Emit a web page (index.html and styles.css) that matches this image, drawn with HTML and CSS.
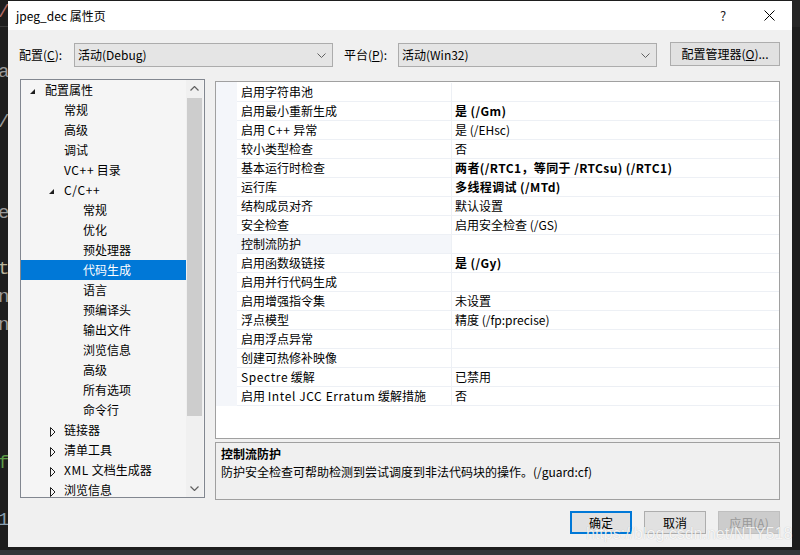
FILE: index.html
```html
<!DOCTYPE html>
<html lang="zh-CN">
<head>
<meta charset="utf-8">
<title>jpeg_dec 属性页</title>
<link rel="stylesheet" href="styles.css">
</head>
<body>
<div class="backdrop" aria-hidden="true">
  <span class="g g-slash1">/</span>
  <span class="g g-a">a</span>
  <span class="g g-slash2">/</span>
  <span class="g g-e">e</span>
  <span class="g g-t">t</span>
  <span class="g g-n1">n</span>
  <span class="g g-n2">n</span>
  <span class="g g-f">f</span>
  <span class="g g-1">1</span>
  <span class="rstrip"></span>
</div>

<div class="dialog">
  <div class="titlebar">
    <span class="title">jpeg_dec 属性页</span>
    <span class="tb-btn help">?</span>
    <span class="tb-btn close"><svg width="11" height="11" viewBox="0 0 11 11"><path d="M0.5 0.5 L10.5 10.5 M10.5 0.5 L0.5 10.5" stroke="#000" stroke-width="1" fill="none"/></svg></span>
  </div>

  <div class="content">
    <div class="toolbar">
      <span class="lbl lbl-config">配置(<u>C</u>):</span>
      <div class="select"><span class="sel-text">活动(Debug)</span><svg class="chev" width="9" height="5" viewBox="0 0 9 5"><polyline points="0.5,0.5 4.5,4.5 8.5,0.5" fill="none" stroke="#606060" stroke-width="1"/></svg></div>
      <span class="lbl lbl-platform">平台(<u>P</u>):</span>
      <div class="select"><span class="sel-text">活动(Win32)</span><svg class="chev" width="9" height="5" viewBox="0 0 9 5"><polyline points="0.5,0.5 4.5,4.5 8.5,0.5" fill="none" stroke="#606060" stroke-width="1"/></svg></div>
      <button class="btn btn-manager">配置管理器(<u>O</u>)...</button>
    </div>

    <div class="main">
      <div class="tree">
        <ul class="tree-list">
          <li class="l0"><span class="tg"><svg width="6" height="6" viewBox="0 0 6 6"><polygon points="5,0 5,5 0,5" fill="#1e1e1e"/></svg></span>配置属性</li>
          <li class="l1"><span class="tg"></span>常规</li>
          <li class="l1"><span class="tg"></span>高级</li>
          <li class="l1"><span class="tg"></span>调试</li>
          <li class="l1"><span class="tg"></span><span class="lat">VC++</span>&nbsp;目录</li>
          <li class="l1"><span class="tg"><svg width="6" height="6" viewBox="0 0 6 6"><polygon points="5,0 5,5 0,5" fill="#1e1e1e"/></svg></span><span class="lat">C/C++</span></li>
          <li class="l2"><span class="tg"></span>常规</li>
          <li class="l2"><span class="tg"></span>优化</li>
          <li class="l2"><span class="tg"></span>预处理器</li>
          <li class="l2 selected"><span class="tg"></span>代码生成</li>
          <li class="l2"><span class="tg"></span>语言</li>
          <li class="l2"><span class="tg"></span>预编译头</li>
          <li class="l2"><span class="tg"></span>输出文件</li>
          <li class="l2"><span class="tg"></span>浏览信息</li>
          <li class="l2"><span class="tg"></span>高级</li>
          <li class="l2"><span class="tg"></span>所有选项</li>
          <li class="l2"><span class="tg"></span>命令行</li>
          <li class="l1"><span class="tg tg-c"><svg width="6" height="10" viewBox="0 0 6 10"><polygon points="0.5,0.5 5,5 0.5,9.5" fill="none" stroke="#1e1e1e" stroke-width="1"/></svg></span>链接器</li>
          <li class="l1"><span class="tg tg-c"><svg width="6" height="10" viewBox="0 0 6 10"><polygon points="0.5,0.5 5,5 0.5,9.5" fill="none" stroke="#1e1e1e" stroke-width="1"/></svg></span>清单工具</li>
          <li class="l1"><span class="tg tg-c"><svg width="6" height="10" viewBox="0 0 6 10"><polygon points="0.5,0.5 5,5 0.5,9.5" fill="none" stroke="#1e1e1e" stroke-width="1"/></svg></span><span class="lat">XML</span>&nbsp;文档生成器</li>
          <li class="l1"><span class="tg tg-c"><svg width="6" height="10" viewBox="0 0 6 10"><polygon points="0.5,0.5 5,5 0.5,9.5" fill="none" stroke="#1e1e1e" stroke-width="1"/></svg></span>浏览信息</li>
        </ul>
        <div class="scrollbar">
          <div class="sb-arrow"><svg width="9" height="5" viewBox="0 0 9 5"><polyline points="0.5,4.5 4.5,0.5 8.5,4.5" fill="none" stroke="#606060" stroke-width="1.2"/></svg></div>
          <div class="sb-track"><div class="sb-thumb"></div></div>
          <div class="sb-arrow"><svg width="9" height="5" viewBox="0 0 9 5"><polyline points="0.5,0.5 4.5,4.5 8.5,0.5" fill="none" stroke="#606060" stroke-width="1.2"/></svg></div>
        </div>
      </div>

      <div class="right">
        <div class="grid">
          <div class="rows">
            <div class="row"><div class="m"></div><div class="name">启用字符串池</div><div class="value"></div></div>
            <div class="row"><div class="m"></div><div class="name">启用最小重新生成</div><div class="value b">是 (/Gm)</div></div>
            <div class="row"><div class="m"></div><div class="name">启用 <span class="lat">C++</span> 异常</div><div class="value">是 (/EHsc)</div></div>
            <div class="row"><div class="m"></div><div class="name">较小类型检查</div><div class="value">否</div></div>
            <div class="row"><div class="m"></div><div class="name">基本运行时检查</div><div class="value b">两者(/RTC1，等同于 /RTCsu) (/RTC1)</div></div>
            <div class="row"><div class="m"></div><div class="name">运行库</div><div class="value b">多线程调试 (/MTd)</div></div>
            <div class="row"><div class="m"></div><div class="name">结构成员对齐</div><div class="value">默认设置</div></div>
            <div class="row"><div class="m"></div><div class="name">安全检查</div><div class="value">启用安全检查 (/GS)</div></div>
            <div class="row current"><div class="m"></div><div class="name">控制流防护</div><div class="value"></div></div>
            <div class="row"><div class="m"></div><div class="name">启用函数级链接</div><div class="value b">是 (/Gy)</div></div>
            <div class="row"><div class="m"></div><div class="name">启用并行代码生成</div><div class="value"></div></div>
            <div class="row"><div class="m"></div><div class="name">启用增强指令集</div><div class="value">未设置</div></div>
            <div class="row"><div class="m"></div><div class="name">浮点模型</div><div class="value">精度 (/fp:precise)</div></div>
            <div class="row"><div class="m"></div><div class="name">启用浮点异常</div><div class="value"></div></div>
            <div class="row"><div class="m"></div><div class="name">创建可热修补映像</div><div class="value"></div></div>
            <div class="row"><div class="m"></div><div class="name"><span class="lat">Spectre</span> 缓解</div><div class="value">已禁用</div></div>
            <div class="row"><div class="m"></div><div class="name">启用 <span class="lat">Intel JCC Erratum</span> 缓解措施</div><div class="value">否</div></div>
          </div>
        </div>
        <div class="desc">
          <div class="desc-title">控制流防护</div>
          <div class="desc-text">防护安全检查可帮助检测到尝试调度到非法代码块的操作。(/guard:cf)</div>
        </div>
      </div>
    </div>

    <div class="buttons">
      <button class="btn btn-dlg btn-default">确定</button>
      <button class="btn btn-dlg">取消</button>
      <button class="btn btn-dlg btn-disabled">应用(<u>A</u>)</button>
    </div>
  </div>
</div>
<div class="bottombar"></div>
<div class="watermark">https://blog.csdn.net/NTY518</div>
</body>
</html>
```

FILE: styles.css
```css
* { box-sizing: border-box; }
html, body { margin: 0; padding: 0; }

body {
  width: 800px;
  height: 555px;
  overflow: hidden;
  position: relative;
  background: #1e1e1e;
  font-family: "Noto Sans CJK SC", "Noto Sans", sans-serif;
  font-size: 12px;
  color: #000;
  padding: 1px 8px 0 8px;
  display: flex;
  flex-direction: column;
}

.lat { letter-spacing: 0.6px; }

/* code editor glimpses behind the dialog */
.backdrop {
  position: absolute;
  inset: 0;
  border-top: 27px solid #1e1e1e;
}
.backdrop::before {
  content: "";
  position: absolute;
  left: 0;
  right: 0;
  top: -1px;
  height: 1px;
  background: #3a3a3a;
}
.g {
  position: absolute;
  left: -2px;
  font-family: "Liberation Mono", "DejaVu Sans Mono", monospace;
  font-size: 19px;
  line-height: 20px;
  color: #9a9a9a;
}
.g-slash1 { top: -25px; color: #b06a64; }
.g-a { top: 35px; }
.g-slash2 { top: 85px; }
.g-e { top: 176px; }
.g-t { top: 232px; color: #b9b39a; }
.g-n1 { top: 260px; }
.g-n2 { top: 288px; }
.g-f { top: 426px; color: #5d9b48; }
.g-1 { top: 483px; color: #8aa0b0; }

.dialog {
  position: relative;
  z-index: 1;
  width: 784px;
  height: 546px;
  flex: none;
  background: #f0f0f0;
  display: flex;
  flex-direction: column;
}

.titlebar {
  height: 29px;
  background: #fff;
  display: flex;
  align-items: center;
  padding-left: 8px;
  flex: none;
}
.title { line-height: 16px; flex: 1; }
.tb-btn {
  width: 46px;
  height: 29px;
  display: flex;
  align-items: center;
  justify-content: center;
}
.help { font-size: 13px; color: #222; }

.content {
  flex: 1;
  display: flex;
  flex-direction: column;
  padding: 13px 12px 0 12px;
}

.toolbar {
  display: flex;
  align-items: center;
  height: 24px;
}
.lbl { line-height: 16px; }
.lbl-config { width: 55px; margin-left: -1px; }
.lbl-platform { width: 54px; margin-left: 11px; }
.select {
  width: 259px;
  height: 24px;
  background: #e5e5e5;
  border: 1px solid #acacac;
  display: flex;
  align-items: center;
  padding: 0 6px 0 3px;
}
.sel-text { flex: 1; line-height: 16px; }
.chev { display: block; }

.btn {
  font-family: inherit;
  font-size: 12px;
  color: #000;
  background: #e1e1e1;
  border: 1px solid #adadad;
  padding: 0;
  margin: 0;
  line-height: 16px;
}
.btn-manager {
  margin-left: auto;
  width: 110px;
  height: 24px;
  position: relative;
  top: -1px;
}

.main {
  display: flex;
  align-items: flex-start;
  margin-top: 12px;
}

/* tree */
.tree {
  width: 185px;
  height: 419px;
  border: 1px solid #828790;
  background: #f5f5f5;
  display: flex;
  overflow: hidden;
}
.tree-list {
  list-style: none;
  margin: 0;
  padding: 0;
  width: 165px;
  flex: none;
}
.tree-list li {
  height: 20px;
  line-height: 20px;
  display: flex;
  white-space: nowrap;
}
.tree-list li.l0 { padding-left: 8px; }
.tree-list li.l1 { padding-left: 27px; }
.tree-list li.l2 { padding-left: 46px; }
.tg {
  width: 16px;
  flex: none;
  position: relative;
}
.tg svg { position: absolute; left: 1px; top: 9px; }
.tg-c svg { left: 2px; top: 7px; }
.tree-list li.selected { background: #0078d7; color: #fff; }

.scrollbar {
  width: 17px;
  flex: none;
  background: #f0f0f0;
  display: flex;
  flex-direction: column;
  height: 100%;
}
.sb-arrow {
  height: 17px;
  display: flex;
  align-items: center;
  justify-content: center;
  flex: none;
}
.sb-track { flex: 1; padding: 1px 1px 0 1px; }
.sb-thumb { height: 318px; background: #cdcdcd; }

/* right side */
.right {
  width: 565px;
  margin-left: 10px;
  margin-top: 2px;
  display: flex;
  flex-direction: column;
}
.grid {
  height: 358px;
  border: 1px solid #a0a0a0;
  background: #fff;
}
.rows {
  padding-top: 1px;
  background: linear-gradient(to right, #f4f6fa 21px, #fff 21px);
}
.row {
  display: grid;
  grid-template-columns: 21px 215px 1fr;
  height: 19px;
}
.row .name, .row .value {
  border-bottom: 1px solid #edf0f5;
  line-height: 18px;
  white-space: nowrap;
  overflow: hidden;
}
.row .name {
  padding-left: 4px;
  border-right: 1px solid #edf0f5;
  background: #fff;
}
.row .value { padding-left: 3px; background: #fff; }
.row.current .name { background: #f4f6fa; }
.value.b { font-weight: 700; letter-spacing: 0.4px; }

.desc {
  margin-top: 3px;
  height: 58px;
  border: 1px solid #a0a0a0;
  background: #f0f0f0;
  padding: 2px 5px 0 5px;
}
.desc-title { font-weight: 700; line-height: 18px; }
.desc-text { line-height: 18px; }

.buttons {
  display: flex;
  justify-content: flex-end;
  gap: 12px;
  margin-top: 11px;
}
.btn-dlg { width: 62px; height: 23px; }
.btn-default { border: 2px solid #0078d7; }
.btn-disabled { background: #cccccc; border-color: #bfbfbf; color: #999; }

.bottombar {
  flex: none;
  height: 5px;
  margin: 3px -8px 0 -8px;
  background: #333337;
}

.rstrip {
  position: absolute;
  right: 0;
  top: -27px;
  width: 8px;
  height: 27px;
  background: #262626;
}

.watermark {
  position: absolute;
  left: 586px;
  top: 524px;
  z-index: 2;
  font-family: "Liberation Sans", Arial, sans-serif;
  font-size: 16px;
  line-height: 20px;
  color: rgba(255, 255, 255, 0.85);
  text-shadow: 0 0 1px rgba(0, 0, 0, 0.22);
  white-space: nowrap;
}
```
